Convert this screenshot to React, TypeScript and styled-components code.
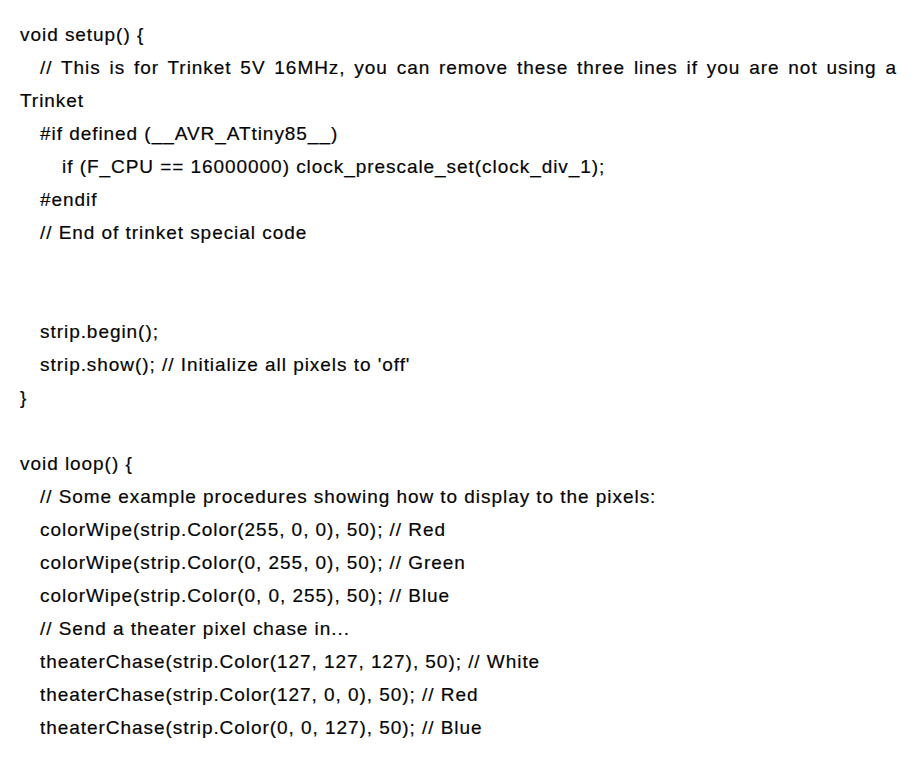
import React from "react";
import styled, { createGlobalStyle } from "styled-components";

const Global = createGlobalStyle`
  html, body { margin: 0; padding: 0; background: #ffffff; }
`;

const Page = styled.div`
  width: 920px;
  height: 760px;
  box-sizing: border-box;
  padding: 18px 23px 0 20px;
  background: #ffffff;
  font-family: "Liberation Sans", Arial, sans-serif;
  font-size: 19px;
  letter-spacing: 0.95px;
  color: #050505;
  -webkit-text-stroke: 0.2px #050505;
  overflow: hidden;
`;

const Line = styled.div<{ $indent?: number; $justify?: boolean }>`
  height: 33px;
  line-height: 33px;
  white-space: ${(p) => (p.$justify ? "normal" : "pre")};
  padding-left: ${(p) => (p.$indent ?? 0) * 20 + ((p.$indent ?? 0) > 1 ? 2 : 0)}px;
  text-align: ${(p) => (p.$justify ? "justify" : "left")};
  text-align-last: ${(p) => (p.$justify ? "justify" : "auto")};
`;

type L = { t: string; i?: number; j?: boolean };

const lines: L[] = [
  { t: "void setup() {" },
  { t: "// This is for Trinket 5V 16MHz, you can remove these three lines if you are not using a", i: 1, j: true },
  { t: "Trinket" },
  { t: "#if defined (__AVR_ATtiny85__)", i: 1 },
  { t: "if (F_CPU == 16000000) clock_prescale_set(clock_div_1);", i: 2 },
  { t: "#endif", i: 1 },
  { t: "// End of trinket special code", i: 1 },
  { t: "" },
  { t: "" },
  { t: "strip.begin();", i: 1 },
  { t: "strip.show(); // Initialize all pixels to 'off'", i: 1 },
  { t: "}" },
  { t: "" },
  { t: "void loop() {" },
  { t: "// Some example procedures showing how to display to the pixels:", i: 1 },
  { t: "colorWipe(strip.Color(255, 0, 0), 50); // Red", i: 1 },
  { t: "colorWipe(strip.Color(0, 255, 0), 50); // Green", i: 1 },
  { t: "colorWipe(strip.Color(0, 0, 255), 50); // Blue", i: 1 },
  { t: "// Send a theater pixel chase in...", i: 1 },
  { t: "theaterChase(strip.Color(127, 127, 127), 50); // White", i: 1 },
  { t: "theaterChase(strip.Color(127, 0, 0), 50); // Red", i: 1 },
  { t: "theaterChase(strip.Color(0, 0, 127), 50); // Blue", i: 1 },
];

export default function App() {
  return (
    <>
      <Global />
      <Page>
        {lines.map((l, k) => (
          <Line key={k} $indent={l.i} $justify={l.j}>
            {l.t}
          </Line>
        ))}
      </Page>
    </>
  );
}
